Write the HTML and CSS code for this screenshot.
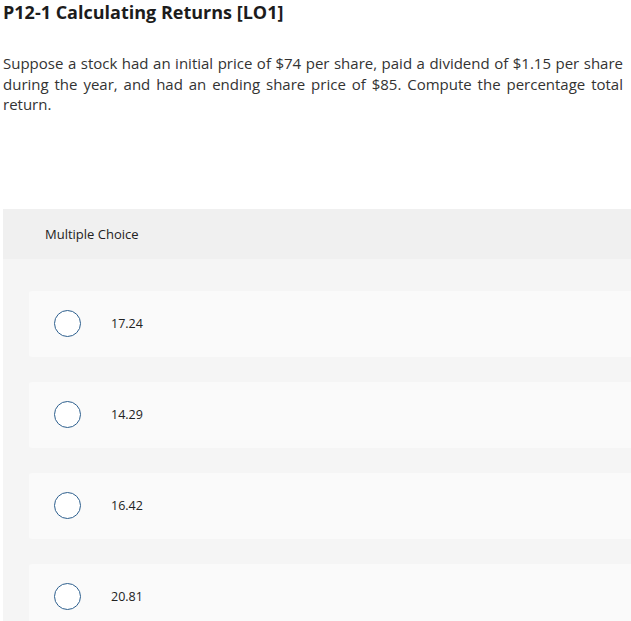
FILE: index.html
```html
<!DOCTYPE html>
<html>
<head>
<meta charset="utf-8">
<link rel="stylesheet" href="styles.css">
</head>
<body>
<div class="page">
  <h1 class="title">P12-1 Calculating Returns [LO1]</h1>
  <p class="question">Suppose a stock had an initial price of $74 per share, paid a dividend of $1.15 per share during the year, and had an ending share price of $85. Compute the percentage total return.</p>
  <section class="panel">
    <div class="panel-head">Multiple Choice</div>
    <div class="panel-body">
      <label class="option"><span class="radio"></span><span class="answer">17.24</span></label>
      <label class="option"><span class="radio"></span><span class="answer">14.29</span></label>
      <label class="option"><span class="radio"></span><span class="answer">16.42</span></label>
      <label class="option"><span class="radio"></span><span class="answer">20.81</span></label>
    </div>
  </section>
</div>
</body>
</html>
```

FILE: styles.css
```css
html, body {
  margin: 0;
  padding: 0;
  background: #ffffff;
  overflow: hidden;
}
.page {
  padding: 0 0 0 3px;
  font-family: "Open Sans", "Lato", sans-serif;
  color: #2a2a2a;
}
.title {
  margin: 0;
  padding-top: 1px;
  font-size: 18px;
  line-height: 22px;
  font-weight: 700;
  color: #1c1c1c;
}
.question {
  margin: 30px 8px 0 0;
  font-size: 15px;
  line-height: 20.5px;
  text-align: justify;
  color: #333333;
}
.panel {
  margin-top: 94px;
  width: 640px;
  background: #f5f5f5;
}
.panel-head {
  height: 50px;
  display: flex;
  align-items: center;
  padding-left: 42px;
  background: #f0f0f0;
  font-size: 13px;
  color: #222222;
}
.panel-body {
  padding: 32px 0 30px 26px;
  display: flex;
  flex-direction: column;
  gap: 25px;
}
.option {
  height: 66px;
  display: flex;
  align-items: center;
  background: #fafafa;
  border-radius: 3px 0 0 3px;
  padding-left: 25px;
}
.radio {
  width: 25px;
  height: 25px;
  border: 1.5px solid #2d5f8e;
  border-radius: 50%;
  background: #ffffff;
  flex: none;
}
.answer {
  margin-left: 30px;
  font-size: 12.5px;
  color: #222222;
}
```
